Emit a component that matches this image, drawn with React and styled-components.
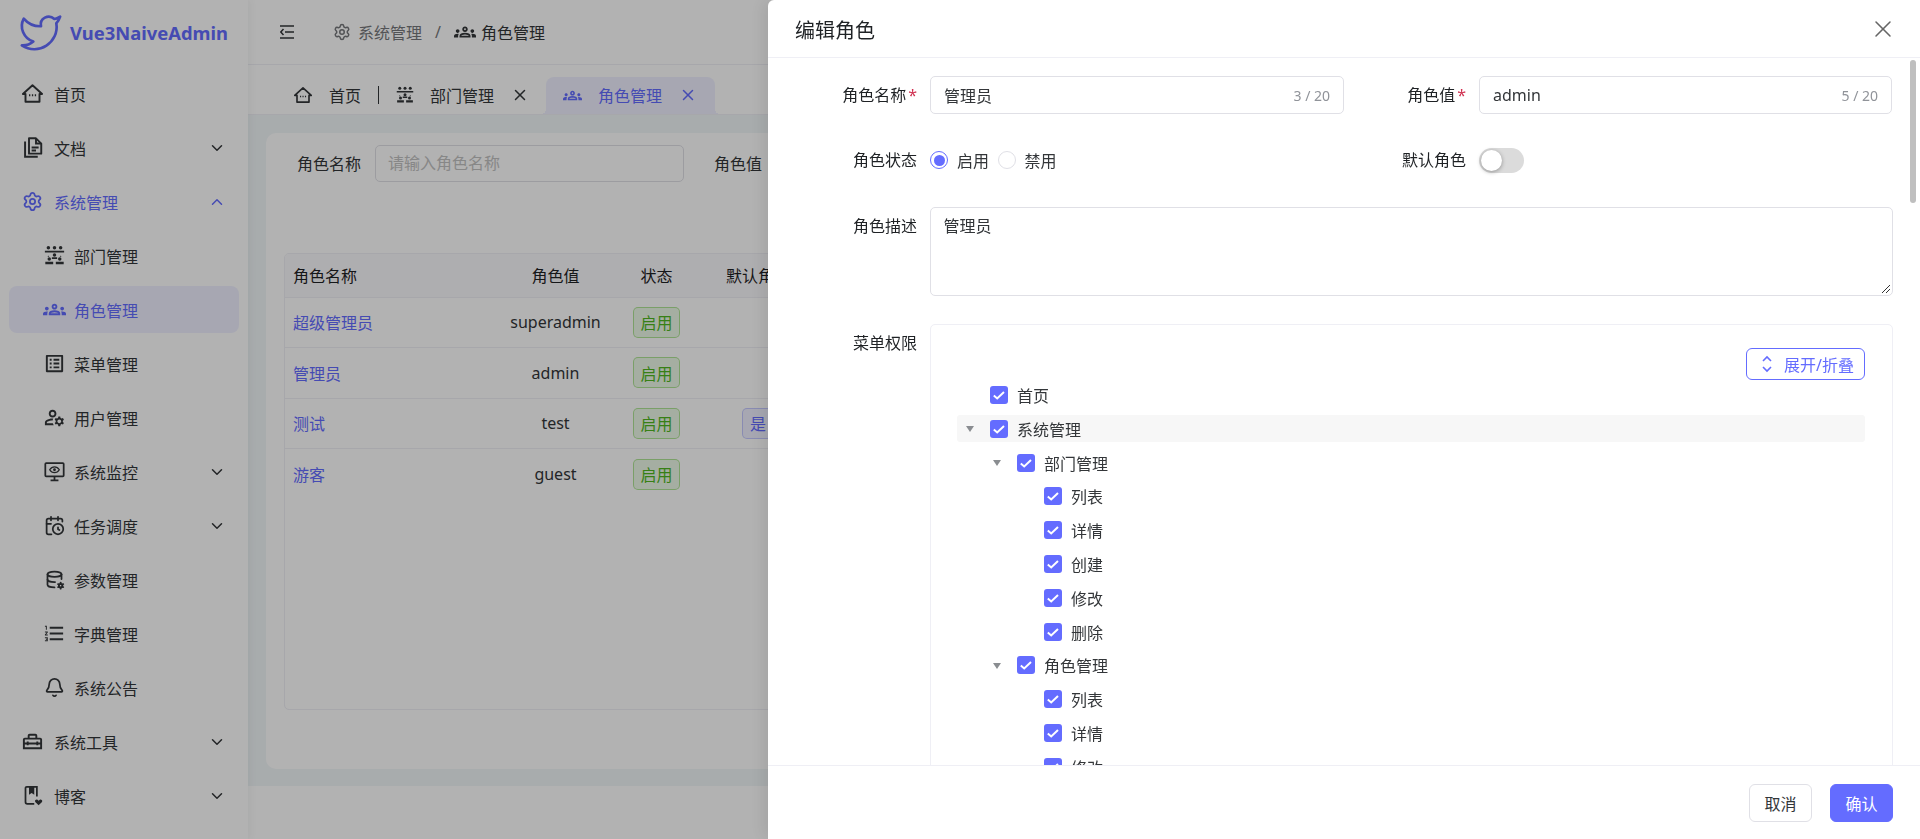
import styled, { createGlobalStyle } from "styled-components";
import { ChevronDown, ChevronUp, CalendarClock, Bell, Settings, Twitter, X } from "lucide-react";
import {
  MdOutlineGroups,
  MdOutlineListAlt,
  MdOutlineManageAccounts,
  MdFormatListNumbered,
  MdOutlineHomeRepairService,
} from "react-icons/md";
import { TbDatabaseCog } from "react-icons/tb";

const GlobalStyle = createGlobalStyle`
  html, body {
    margin: 0;
    height: 100%;
    overflow: hidden;
    font-family: "Noto Sans", "Noto Sans CJK SC", sans-serif;
    font-size: 16px;
    color: #333639;
    background: #fff;
  }
  * { box-sizing: border-box; }
`;

const primary = "#646cff";

// hand drawn icons, the packages have nothing close to these
const HomeIcon = () => (
  <svg viewBox="0 0 24 24" width="100%" height="100%" fill="none" stroke="currentColor" strokeWidth="2.2">
    <path d="M1 12.5 12 2.5l11 10h-3V21.5H4v-9z" strokeLinejoin="round" />
    <path d="M8 14h1.5M11.3 14h1.5M14.6 14h1.5" />
  </svg>
);
const DocIcon = () => (
  <svg viewBox="0 0 24 24" width="100%" height="100%" fill="none" stroke="currentColor" strokeWidth="2.2">
    <path d="M8 1.5h8l6 6V19H8z" strokeLinejoin="round" />
    <path d="M16 1.5v6h6M11 12h8M11 15.5h5" />
    <path d="M3.5 5v17.5H18" />
  </svg>
);
const DeptIcon = () => (
  <svg viewBox="0 0 24 24" width="100%" height="100%" fill="currentColor">
    <circle cx="5" cy="3" r="2" /><circle cx="12" cy="3" r="2" /><circle cx="19" cy="3" r="2" />
    <path d="M1 6.5h8v2H1zM9 6.5h6v2H9zM15 6.5h8v2h-8z" />
    <circle cx="12" cy="11.5" r="2" /><path d="M5 12l1 1.5h-2zM19 12l1 1.5h-2z" />
    <circle cx="6" cy="16" r="2" /><circle cx="18" cy="16" r="2" />
    <path d="M1.5 19h9v3h-9zM13.5 19h9v3h-9zM9 14h6v2H9z" />
  </svg>
);
const MonitorIcon = () => (
  <svg viewBox="0 0 24 24" width="100%" height="100%" fill="none" stroke="currentColor" strokeWidth="2">
    <rect x="1.5" y="2.5" width="21" height="15" rx="1" />
    <path d="M6.5 10c2.8-4.4 8.2-4.4 11 0-2.8 4.4-8.2 4.4-11 0z" strokeWidth="1.5" />
    <circle cx="12" cy="10" r="1.6" fill="currentColor" stroke="none" />
    <path d="M12 18v3M7.5 22h9" />
  </svg>
);
const BlogIcon = () => (
  <svg viewBox="0 0 24 24" width="100%" height="100%" fill="none" stroke="currentColor" strokeWidth="2">
    <path d="M14 21.5H6a2 2 0 0 1-2-2v-16a1.5 1.5 0 0 1 1.5-1.5H17v11" />
    <path d="M8 2h6v9l-3-2-3 2z" fill="currentColor" stroke="none" />
    <path d="M19 23l-3.6-3.4c-1.7-1.8.9-4.3 2.6-2.6l1 1 1-1c1.7-1.7 4.3.8 2.6 2.6z" fill="currentColor" stroke="none" />
  </svg>
);
const FoldIcon = () => (
  <svg viewBox="0 0 14 14" width="100%" height="100%" fill="none" stroke="currentColor" strokeWidth="1.5">
    <path d="M0 1h14M5 7h9M0 13h14M3.5 4 .8 7l2.7 3" />
  </svg>
);
const UnfoldIcon = () => (
  <svg viewBox="0 0 16 18" width="16" height="18" fill="none" stroke="currentColor" strokeWidth="1.6">
    <path d="M4 6 8 2l4 4M4 12l4 4 4-4" />
  </svg>
);
const CheckMark = () => (
  <svg viewBox="0 0 18 18" width="18" height="18" fill="none" stroke="#fff" strokeWidth="2">
    <path d="M3.8 9.4 7.2 12.4 14 6" />
  </svg>
);

const Page = styled.div`
  display: flex;
  height: 839px;
`;

const Sidebar = styled.aside`
  width: 248px;
  flex: none;
  background: #fff;
  box-shadow: 2px 0 8px rgba(29, 35, 41, 0.05);
  z-index: 1;
`;

const Logo = styled.div`
  height: 64px;
  display: flex;
  align-items: center;
  padding-left: 18px;
  color: ${primary};
  font-size: 18.4px;
  font-weight: 700;
  white-space: nowrap;
  span { margin-left: 6px; }
`;

const Menu = styled.nav`
  display: flex;
  flex-direction: column;
  gap: 7px;
  padding: 6px 9px 0;
`;

const MenuItem = styled.div`
  height: 47px;
  display: flex;
  align-items: center;
  padding-left: ${(p) => (p.$sub ? 35 : 13)}px;
  border-radius: 8px;
  background: ${(p) => (p.$active ? "rgba(100,108,255,0.1)" : "transparent")};
  color: ${(p) => (p.$on ? primary : "#333639")};
`;

const MenuIcon = styled.span`
  width: 20px;
  height: 20px;
  display: flex;
  align-items: center;
  justify-content: center;
  margin-right: ${(p) => (p.$sub ? 10 : 12)}px;
  svg {
    flex: none;
    width: ${(p) => (p.$big ? 23 : 21)}px;
    height: ${(p) => (p.$big ? 23 : 21)}px;
  }
`;

const Caret = styled.span`
  margin-left: auto;
  margin-right: 13px;
  display: flex;
  color: ${(p) => (p.$on ? primary : "#333639")};
`;

const Main = styled.div`
  flex: 1;
  display: flex;
  flex-direction: column;
  min-width: 0;
`;

const Header = styled.header`
  height: 64.5px;
  flex: none;
  display: flex;
  align-items: center;
  padding-left: 32px;
  border-bottom: 1px solid #efeff5;
`;

const FoldBox = styled.span`
  width: 14px;
  height: 14px;
  display: flex;
  margin-right: 39px;
`;

const Crumb = styled.span`
  display: flex;
  align-items: center;
  gap: ${(p) => (p.$last ? 5 : 7)}px;
  color: ${(p) => (p.$last ? "#333639" : "#76787b")};
`;

const CrumbSep = styled.span`
  color: #76787b;
  margin: 0 13px;
`;

const TabBar = styled.div`
  height: 50px;
  flex: none;
  display: flex;
  align-items: flex-end;
  padding-left: 46px;
  border-bottom: 1px solid #efeff5;
`;

const TabItem = styled.div`
  position: relative;
  height: 37px;
  display: flex;
  align-items: center;
  padding: 0 ${(p) => (p.$active ? 18 : 0)}px 0 ${(p) => (p.$active ? 17 : 0)}px;
  margin-right: ${(p) => p.$mr || 0}px;
  border-radius: 8px 8px 0 0;
  color: ${(p) => (p.$active ? primary : "#333639")};
  background: ${(p) => (p.$active ? "rgba(100,108,255,0.1)" : "transparent")};
  ${(p) =>
    p.$active &&
    `
    &::before, &::after {
      content: "";
      position: absolute;
      bottom: 0;
      width: 5px;
      height: 5px;
    }
    &::before {
      left: -5px;
      background: radial-gradient(circle at 0 0, transparent 5px, rgba(100,108,255,0.1) 5px);
    }
    &::after {
      right: -5px;
      background: radial-gradient(circle at 100% 0, transparent 5px, rgba(100,108,255,0.1) 5px);
    }
  `}
`;

const TabIcon = styled.span`
  width: 18px;
  height: 18px;
  display: flex;
  align-items: center;
  justify-content: center;
  margin-right: ${(p) => p.$gap}px;
  svg { flex: none; width: ${(p) => p.$size || 18}px; height: ${(p) => p.$size || 18}px; }
`;

const TabClose = styled(X)`
  margin-left: 17px;
`;

const TabDivider = styled.span`
  width: 1px;
  height: 18px;
  background: #333639;
  margin: 0 17px 10px;
`;

const Content = styled.div`
  flex: 1;
  background: #f1f6f8;
  padding: 18px;
  min-height: 0;
`;

const BottomStrip = styled.footer`
  height: 53px;
  flex: none;
  background: #fff;
`;

const Card = styled.section`
  height: 636px;
  border-radius: 10px;
  background: #fff;
  padding: 12px 18px;
`;

const Filter = styled.div`
  display: flex;
  align-items: center;
  height: 37px;
  padding-left: 13px;
  margin-bottom: 71px;
`;

const FilterInput = styled.div`
  width: 309px;
  height: 37px;
  margin: 0 30px 0 14px;
  padding: 0 12px;
  border: 1px solid #e0e0e6;
  border-radius: 5px;
  color: #c2c2c2;
  line-height: 35px;
`;

const Table = styled.div`
  height: 457px;
  border: 1px solid #efeff5;
  border-radius: 5px;
  overflow: hidden;
`;

const Row = styled.div`
  display: grid;
  grid-template-columns: 220px 101px 101px 102px 1fr;
  align-items: center;
  height: ${(p) => (p.$head ? 44 : 50.5)}px;
  background: ${(p) => (p.$head ? "#fafafc" : "#fff")};
  border-bottom: 1px solid #efeff5;
  &:last-child { border-bottom: 0; }
`;

const NameCell = styled.div`
  padding-left: 8px;
  color: ${(p) => (p.$link ? primary : "#1f2225")};
`;

const Cell = styled.div`
  display: flex;
  justify-content: center;
  white-space: nowrap;
  color: ${(p) => (p.$head ? "#1f2225" : "#333639")};
`;

const Tag = styled.span`
  height: 31px;
  padding: 0 6.5px;
  display: inline-flex;
  align-items: center;
  border-radius: 5px;
  border: 1px solid ${(p) => (p.$type === "primary" ? "rgba(100,108,255,.3)" : "rgba(82,196,26,.4)")};
  color: ${(p) => (p.$type === "primary" ? primary : "#4fb81f")};
  background: ${(p) => (p.$type === "primary" ? "rgba(100,108,255,.1)" : "rgba(82,196,26,.1)")};
`;

const Mask = styled.div`
  position: fixed;
  inset: 0;
  background: rgba(0, 0, 0, 0.3);
  z-index: 5;
`;

const Drawer = styled.aside`
  position: fixed;
  top: 0;
  right: 0;
  bottom: 0;
  width: 1152px;
  z-index: 6;
  display: flex;
  flex-direction: column;
  background: #fff;
  border-radius: 6px 0 0 6px;
  box-shadow: -6px 0 16px rgba(0, 0, 0, 0.08);
`;

const DrawerHead = styled.div`
  height: 58px;
  flex: none;
  display: flex;
  align-items: center;
  justify-content: space-between;
  padding: 2px 23px 0 27px;
  border-bottom: 1px solid #efeff5;
  font-size: 20px;
  color: #1f2225;
`;

const CloseIcon = styled(X)`
  color: #666;
  margin-top: -2px;
`;

const DrawerBody = styled.div`
  flex: 1;
  min-height: 0;
  overflow: hidden;
  position: relative;
  padding: 18px 27px 0 0;
`;

const ScrollThumb = styled.span`
  position: absolute;
  top: 2px;
  right: 4px;
  width: 6px;
  height: 143px;
  border-radius: 3px;
  background: #bfbfbf;
`;

const FormRow = styled.div`
  display: flex;
  align-items: ${(p) => (p.$top ? "flex-start" : "center")};
  margin-bottom: ${(p) => p.$mb}px;
`;

const FormCol = styled.div`
  display: flex;
  align-items: center;
  flex: ${(p) => (p.$grow ? 1 : "none")};
  width: ${(p) => (p.$grow ? "auto" : "576px")};
`;

const Label = styled.label`
  width: 162px;
  flex: none;
  padding-right: 13px;
  text-align: right;
  color: #1f2225;
  white-space: nowrap;
  line-height: 24px;
  ${(p) => p.$top && "padding-top: 7px;"}
  b {
    font-weight: 400;
    color: #d03050;
    margin-left: 2px;
  }
`;

const Narrow = styled(Label)`
  width: 135px;
`;

const Input = styled.div`
  height: 38px;
  width: ${(p) => p.$w}px;
  display: flex;
  align-items: center;
  justify-content: space-between;
  padding: 0 13px;
  border: 1px solid #e0e0e6;
  border-radius: 5px;
  color: #333639;
  small { font-size: 14px; color: #909399; }
`;

const RadioDot = styled.span`
  width: 18px;
  height: 18px;
  border-radius: 50%;
  border: 1px solid ${(p) => (p.$on ? primary : "#e0e0e6")};
  display: flex;
  align-items: center;
  justify-content: center;
  margin: 0 9px 0 ${(p) => p.$ml || 0}px;
  &::after {
    content: "";
    width: 11px;
    height: 11px;
    border-radius: 50%;
    background: ${(p) => (p.$on ? primary : "transparent")};
  }
`;

const Switch = styled.span`
  width: 45px;
  height: 25px;
  border-radius: 13px;
  background: #dbdbdb;
  padding: 2px;
  &::after {
    content: "";
    display: block;
    width: 21px;
    height: 21px;
    border-radius: 50%;
    background: #fff;
    box-shadow: 0 1px 4px rgba(0, 0, 0, 0.35);
  }
`;

const TextArea = styled.div`
  position: relative;
  flex: 1;
  height: 89px;
  padding: 5px 12.5px;
  border: 1px solid #e0e0e6;
  border-radius: 5px;
  color: #333639;
  svg { position: absolute; right: 1px; bottom: 1px; }
`;

const TreeBox = styled.div`
  position: relative;
  flex: 1;
  height: 460px;
  padding: 56.5px 27px 0 26px;
  border: 1px solid #efeff5;
  border-radius: 5px;
`;

const ExpandBtn = styled.button`
  position: absolute;
  top: 23px;
  right: 27px;
  width: 119px;
  height: 32px;
  display: flex;
  align-items: center;
  justify-content: center;
  gap: 9px;
  padding: 0 0 0 2px;
  border: 1px solid ${primary};
  border-radius: 6px;
  background: #fff;
  color: ${primary};
  font: inherit;
`;

const TreeRow = styled.div`
  height: 27px;
  margin-bottom: 6.8px;
  display: flex;
  align-items: center;
  padding-left: ${(p) => 33 + p.$level * 27}px;
  position: relative;
  border-radius: 3px;
  background: ${(p) => (p.$hover ? "#f7f7f7" : "transparent")};
  color: #333639;
`;

const Arrow = styled.span`
  position: absolute;
  left: ${(p) => 9 + p.$level * 27}px;
  top: 11px;
  border: 4px solid transparent;
  border-top: 6px solid #8a8d91;
  border-bottom: 0;
`;

const Check = styled.span`
  width: 18px;
  height: 18px;
  margin-right: 9px;
  border-radius: 3px;
  background: ${primary};
  display: flex;
`;

const DrawerFoot = styled.div`
  height: 74px;
  flex: none;
  display: flex;
  align-items: center;
  justify-content: flex-end;
  gap: 18px;
  padding: 0 27px 0 0;
  border-top: 1px solid #efeff5;
  background: #fff;
  z-index: 1;
`;

const FootBtn = styled.button`
  width: 63px;
  height: 38px;
  border-radius: 6px;
  border: 1px solid ${(p) => (p.$primary ? primary : "#e0e0e6")};
  background: ${(p) => (p.$primary ? primary : "#fff")};
  color: ${(p) => (p.$primary ? "#fff" : "#333639")};
  font: inherit;
`;

const menu = [
  { label: "首页", icon: <HomeIcon /> },
  { label: "文档", icon: <DocIcon />, caret: "down" },
  { label: "系统管理", icon: <Settings />, caret: "up", on: true },
  { label: "部门管理", icon: <DeptIcon />, sub: true },
  { label: "角色管理", icon: <MdOutlineGroups />, sub: true, on: true, active: true, big: true },
  { label: "菜单管理", icon: <MdOutlineListAlt />, sub: true, big: true },
  { label: "用户管理", icon: <MdOutlineManageAccounts />, sub: true, big: true },
  { label: "系统监控", icon: <MonitorIcon />, sub: true, caret: "down" },
  { label: "任务调度", icon: <CalendarClock />, sub: true, caret: "down" },
  { label: "参数管理", icon: <TbDatabaseCog />, sub: true },
  { label: "字典管理", icon: <MdFormatListNumbered />, sub: true, big: true },
  { label: "系统公告", icon: <Bell />, sub: true },
  { label: "系统工具", icon: <MdOutlineHomeRepairService />, caret: "down", big: true },
  { label: "博客", icon: <BlogIcon />, caret: "down" },
];

const roles = [
  { name: "超级管理员", value: "superadmin" },
  { name: "管理员", value: "admin" },
  { name: "测试", value: "test", isDefault: true },
  { name: "游客", value: "guest" },
];

const tree = [
  { label: "首页", level: 0 },
  { label: "系统管理", level: 0, open: true, hover: true },
  { label: "部门管理", level: 1, open: true },
  { label: "列表", level: 2 },
  { label: "详情", level: 2 },
  { label: "创建", level: 2 },
  { label: "修改", level: 2 },
  { label: "删除", level: 2 },
  { label: "角色管理", level: 1, open: true },
  { label: "列表", level: 2 },
  { label: "详情", level: 2 },
  { label: "修改", level: 2 },
];

export default function App() {
  return (
    <>
      <GlobalStyle />
      <Page>
        <Sidebar>
          <Logo>
            <Twitter size={46} strokeWidth={1.4} />
            <span>Vue3NaiveAdmin</span>
          </Logo>
          <Menu>
            {menu.map((m) => (
              <MenuItem key={m.label} $sub={m.sub} $on={m.on} $active={m.active}>
                <MenuIcon $sub={m.sub} $big={m.big}>{m.icon}</MenuIcon>
                {m.label}
                {m.caret && (
                  <Caret $on={m.on}>
                    {m.caret === "up" ? <ChevronUp size={18} /> : <ChevronDown size={18} />}
                  </Caret>
                )}
              </MenuItem>
            ))}
          </Menu>
        </Sidebar>
        <Main>
          <Header>
            <FoldBox><FoldIcon /></FoldBox>
            <Crumb><Settings size={18} />系统管理</Crumb>
            <CrumbSep>/</CrumbSep>
            <Crumb $last><MdOutlineGroups size={22} />角色管理</Crumb>
          </Header>
          <TabBar>
            <TabItem>
              <TabIcon $gap={17}><HomeIcon /></TabIcon>首页
            </TabItem>
            <TabDivider />
            <TabItem $mr={17}>
              <TabIcon $gap={16}><DeptIcon /></TabIcon>部门管理
              <TabClose size={18} />
            </TabItem>
            <TabItem $active>
              <TabIcon $gap={17} $size={19}><MdOutlineGroups /></TabIcon>角色管理
              <TabClose size={18} />
            </TabItem>
          </TabBar>
          <Content>
            <Card>
              <Filter>
                角色名称
                <FilterInput>请输入角色名称</FilterInput>
                角色值
              </Filter>
              <Table>
                <Row $head>
                  <NameCell>角色名称</NameCell>
                  <Cell $head>角色值</Cell>
                  <Cell $head>状态</Cell>
                  <Cell $head>默认角色</Cell>
                </Row>
                {roles.map((r) => (
                  <Row key={r.value}>
                    <NameCell $link>{r.name}</NameCell>
                    <Cell>{r.value}</Cell>
                    <Cell><Tag>启用</Tag></Cell>
                    <Cell>{r.isDefault && <Tag $type="primary">是</Tag>}</Cell>
                  </Row>
                ))}
              </Table>
            </Card>
          </Content>
          <BottomStrip />
        </Main>
      </Page>
      <Mask />
      <Drawer>
        <DrawerHead>
          编辑角色
          <CloseIcon size={28} strokeWidth={1.3} />
        </DrawerHead>
        <DrawerBody>
          <ScrollThumb />
          <FormRow $mb={33.5}>
            <FormCol>
              <Label>角色名称<b>*</b></Label>
              <Input $w={414}>管理员<small>3 / 20</small></Input>
            </FormCol>
            <FormCol $grow>
              <Narrow>角色值<b>*</b></Narrow>
              <Input $w={413}>admin<small>5 / 20</small></Input>
            </FormCol>
          </FormRow>
          <FormRow $mb={34.5}>
            <FormCol>
              <Label>角色状态</Label>
              <RadioDot $on />启用
              <RadioDot $ml={8.5} />禁用
            </FormCol>
            <FormCol $grow>
              <Narrow>默认角色</Narrow>
              <Switch />
            </FormCol>
          </FormRow>
          <FormRow $top $mb={28}>
            <Label $top>角色描述</Label>
            <TextArea>
              管理员
              <svg width="10" height="10" viewBox="0 0 10 10" stroke="#333" strokeWidth="1">
                <path d="M1 9 9 1M5 9l4-4" />
              </svg>
            </TextArea>
          </FormRow>
          <FormRow $top $mb={0}>
            <Label $top>菜单权限</Label>
            <TreeBox>
              <ExpandBtn><UnfoldIcon />展开/折叠</ExpandBtn>
              {tree.map((t, i) => (
                <TreeRow key={i} $level={t.level} $hover={t.hover}>
                  {t.open && <Arrow $level={t.level} />}
                  <Check><CheckMark /></Check>
                  {t.label}
                </TreeRow>
              ))}
            </TreeBox>
          </FormRow>
        </DrawerBody>
        <DrawerFoot>
          <FootBtn>取消</FootBtn>
          <FootBtn $primary>确认</FootBtn>
        </DrawerFoot>
      </Drawer>
    </>
  );
}
